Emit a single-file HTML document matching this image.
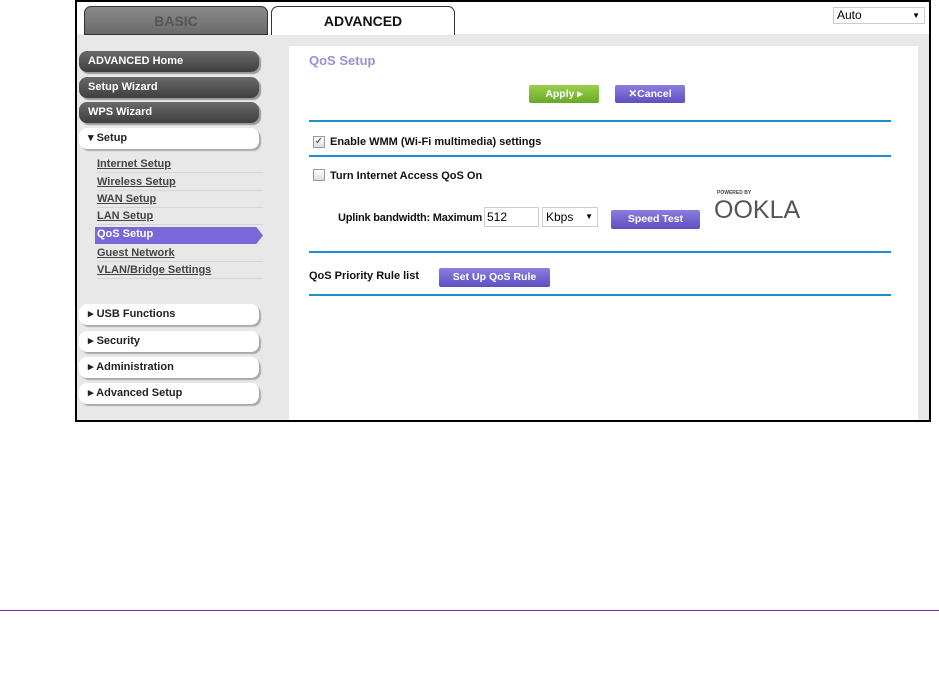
<!DOCTYPE html>
<html><head><style>
*{margin:0;padding:0;box-sizing:border-box}
body{width:939px;height:680px;background:#fff;font-family:"Liberation Sans",Arial,sans-serif;position:relative;overflow:hidden}
.a{position:absolute}
.frame{left:75px;top:0;width:856px;height:422px;border:2px solid #000;background:#e8e8e8;overflow:hidden}
.top{left:0;top:0;width:852px;height:32px;background:#fff}
.tab{top:4px;height:29px;width:184px;border-radius:7px 7px 0 0;font-weight:bold;font-size:14px;text-align:center;line-height:29px}
.btn{left:2px;width:180px;height:21px;border-radius:8px;font-weight:bold;font-size:11px;line-height:21px;padding-left:9px}
.dk{background:linear-gradient(#6a6a6a,#3e3e3e);color:#fff;box-shadow:2px 2px 1px #999}
.wh{background:#fff;color:#222;box-shadow:2px 2px 1px #aaa;padding-left:9px}
.sub{left:20px;width:166px;font-size:11px;font-weight:bold;color:#444;text-decoration:underline;height:17px;line-height:17px;border-bottom:1px solid #d6d6d6}
.line{left:232px;width:582px;height:2px;background:#1e8fcc}
.pb{height:18px;border-radius:2px;color:#fff;font-weight:bold;font-size:10.5px;text-align:center;line-height:18px;background:linear-gradient(#8a7ee0,#5e4fc0)}
.t{font-size:11px;font-weight:bold;color:#111}
.cb{width:12px;height:12px;border:1px solid #999;background:linear-gradient(#fff,#ddd)}
</style></head><body>
<div class="a frame">
 <div class="a top"></div>
 <div class="a tab" style="left:7px;background:linear-gradient(#8a8a8a,#6a6a6a);border:1px solid #333;color:#555">BASIC</div>
 <div class="a tab" style="left:194px;background:#fff;border:1px solid #333;border-bottom:none;color:#111">ADVANCED</div>
 <div class="a" style="left:756px;top:5px;width:92px;height:17px;border:1px solid #ccc;background:#fff;font-size:12px;padding-left:3px;line-height:15px">Auto<span style="position:absolute;right:4px;font-size:8px">▼</span></div>
 <div class="a btn dk" style="top:49px">ADVANCED Home</div>
 <div class="a btn dk" style="top:75px">Setup Wizard</div>
 <div class="a btn dk" style="top:100px">WPS Wizard</div>
 <div class="a btn wh" style="top:126px">▾ Setup</div>
 <div class="a sub" style="top:154px">Internet Setup</div>
 <div class="a sub" style="top:172px">Wireless Setup</div>
 <div class="a sub" style="top:189px">WAN Setup</div>
 <div class="a sub" style="top:206px">LAN Setup</div>
 <div class="a" style="left:18px;top:225px;width:168px;height:17px;background:#7b68d8;clip-path:polygon(0 0,96% 0,100% 50%,96% 100%,0 100%)"></div>
 <div class="a sub" style="top:224px;color:#fff;text-decoration:none;border:none">QoS Setup</div>
 <div class="a sub" style="top:243px">Guest Network</div>
 <div class="a sub" style="top:260px">VLAN/Bridge Settings</div>
 <div class="a btn wh" style="top:302px">▸ USB Functions</div>
 <div class="a btn wh" style="top:329px">▸ Security</div>
 <div class="a btn wh" style="top:355px">▸ Administration</div>
 <div class="a btn wh" style="top:381px">▸ Advanced Setup</div>
 <div class="a" style="left:212px;top:44px;width:629px;height:374px;background:#fff"></div>
 <div class="a" style="left:232px;top:51px;font-size:13px;font-weight:bold;color:#9a8fd8">QoS Setup</div>
 <div class="a pb" style="left:452px;top:83px;width:70px;background:linear-gradient(#9ad04a,#6aa82a)">Apply ▸</div>
 <div class="a pb" style="left:538px;top:83px;width:70px">✕Cancel</div>
 <div class="a line" style="top:118px"></div>
 <div class="a cb" style="left:236px;top:134px;font-size:10px;line-height:10px;color:#336;text-align:center">✓</div>
 <div class="a t" style="left:253px;top:134px">Enable WMM (Wi-Fi multimedia) settings</div>
 <div class="a line" style="top:153px"></div>
 <div class="a cb" style="left:236px;top:167px"></div>
 <div class="a t" style="left:253px;top:168px">Turn Internet Access QoS On</div>
 <div class="a t" style="left:261px;top:210px;letter-spacing:-0.2px">Uplink bandwidth: Maximum</div>
 <div class="a" style="left:407px;top:205px;width:55px;height:20px;border:1px solid #ccc;font-size:12px;padding:2px 2px">512</div>
 <div class="a" style="left:465px;top:205px;width:56px;height:20px;border:1px solid #ccc;font-size:12px;padding:2px 3px">Kbps<span style="position:absolute;right:4px;top:4px;font-size:8px">▼</span></div>
 <div class="a pb" style="left:534px;top:208px;width:89px;height:19px">Speed Test</div>
 <div class="a" style="left:640px;top:188px;font-size:5px;font-weight:bold;color:#444">POWERED BY</div>
 <div class="a" style="left:637px;top:194px;font-size:25px;color:#555;letter-spacing:0">OOKLA</div>
 <div class="a line" style="top:249px"></div>
 <div class="a t" style="left:232px;top:268px">QoS Priority Rule list</div>
 <div class="a pb" style="left:362px;top:266px;width:111px;height:19px">Set Up QoS Rule</div>
 <div class="a line" style="top:292px"></div>
</div>
<div class="a" style="left:0;top:610px;width:939px;height:1px;background:#7030a0"></div>
</body></html>
